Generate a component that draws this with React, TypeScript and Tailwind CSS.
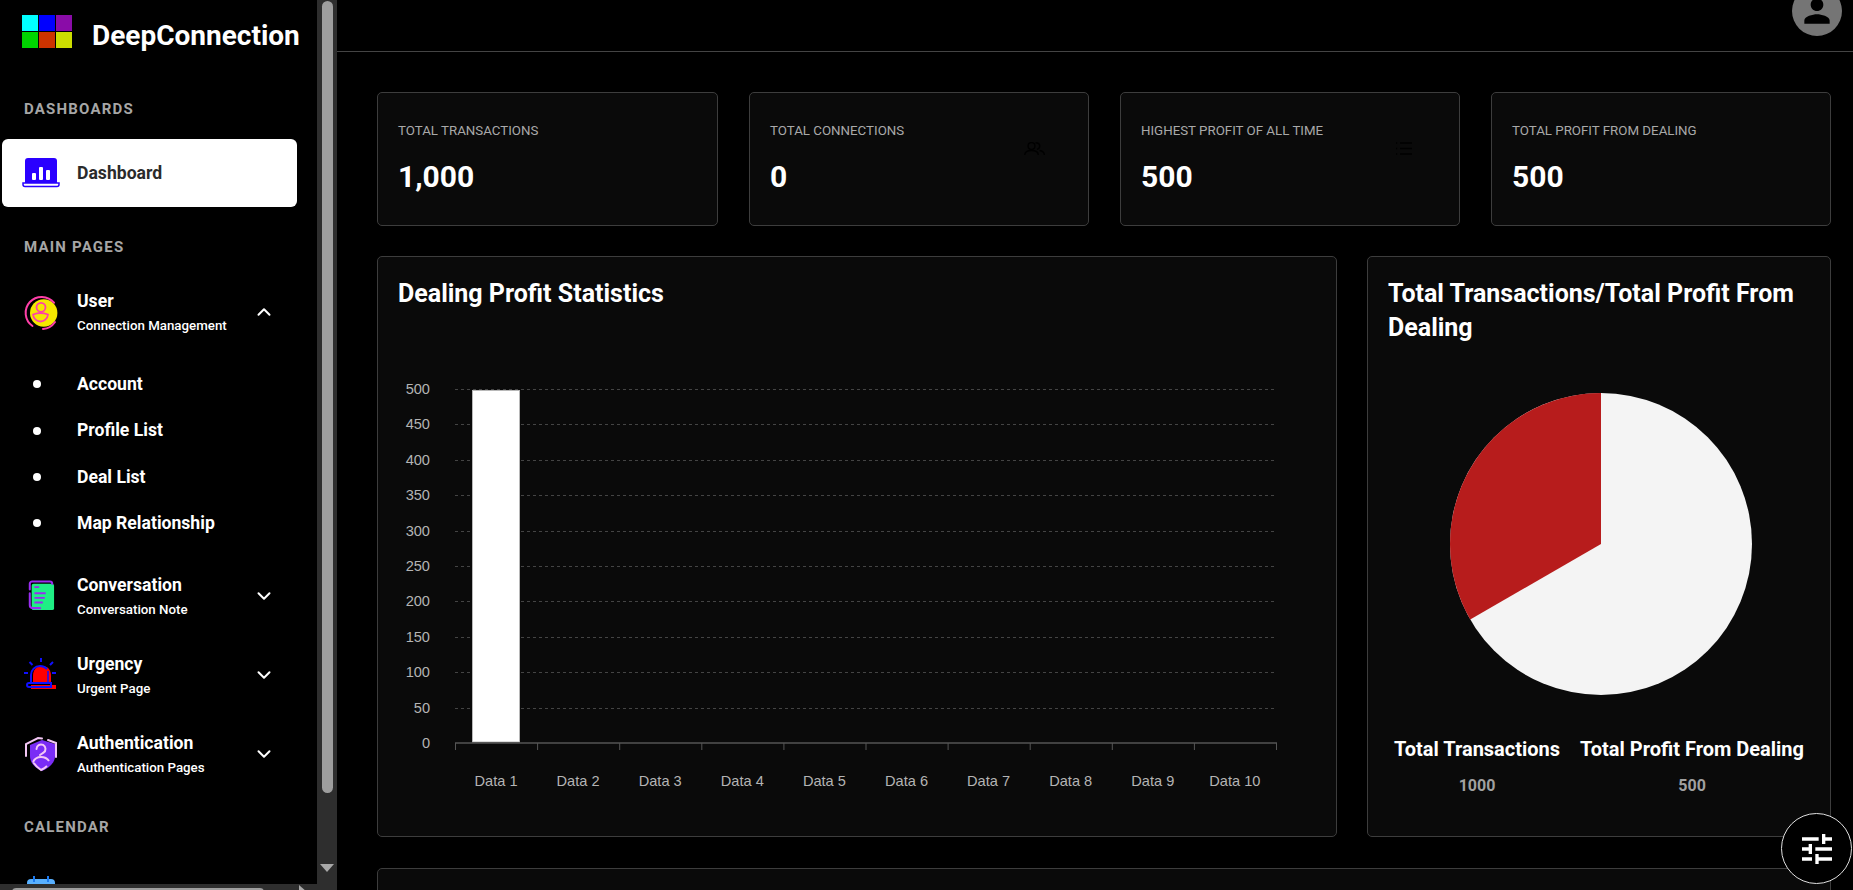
import { ChevronDown, ChevronUp } from "lucide-react";

function FaintUsers() {
	return (
		<svg width="21" height="13" viewBox="0 0 21 13" fill="none" stroke="currentColor" strokeWidth="1.4">
			<circle cx="7.5" cy="4" r="3.400" />
			<path d="M0.700 13c0-3 2.500-4.500 6.800-4.500s6.800 1.500 6.800 4.500" />
			<path d="M11.500 0.800c2.500 0 4.200 1.400 4.200 3.300 0 1.700-1 3-2.800 3.300" />
			<path d="M15.500 8.500c2.800 0.400 4.800 2 4.800 4.500" />
		</svg>
	);
}

function FaintList() {
	return (
		<svg width="21" height="13" viewBox="0 0 21 13" fill="none" stroke="currentColor" strokeWidth="1.4">
			<path d="M5 1h12M5 6.500h12M5 12h12" />
			<path d="M1 1h1.200M1 6.500h1.200M1 12h1.200" />
		</svg>
	);
}

const stats = [
	{ label: "Total Transactions", value: "1,000" },
	{ label: "Total Connections", value: "0", icon: <FaintUsers /> },
	{ label: "Highest Profit of all time", value: "500", icon: <FaintList /> },
	{ label: "Total Profit From Dealing", value: "500" },
];

const ticks = [500, 450, 400, 350, 300, 250, 200, 150, 100, 50, 0];
const bars = [1, 2, 3, 4, 5, 6, 7, 8, 9, 10];
const subItems = ["Account", "Profile List", "Deal List", "Map Relationship"];

function DashboardIcon() {
	return (
		<svg width="38" height="30" viewBox="0 0 38 30">
			<path d="M3 26V3a3 3 0 0 1 3-3h26a3 3 0 0 1 3 3v23z" fill="#2a00ff" />
			<rect x="10" y="15" width="4" height="7" rx="1" fill="#fff" />
			<rect x="17" y="9" width="4" height="13" rx="1" fill="#fff" />
			<rect x="24" y="12" width="4" height="10" rx="1" fill="#fff" />
			<path d="M1 25h36v1.500a2 2 0 0 1-2 2H3a2 2 0 0 1-2-2z" fill="#fff" stroke="#2a00ff" strokeWidth="1.500" />
		</svg>
	);
}

function UserIcon() {
	return (
		<svg width="40" height="40" viewBox="0 0 40 40" fill="none">
			<circle cx="22.700" cy="21" r="13.700" fill="#f5e800" />
			<path d="M33 10.700A16 16 0 1 0 11.500 34" stroke="#ff3fa8" strokeWidth="2" strokeLinecap="round" />
			<path d="M22 37A16 16 0 0 0 34 30" stroke="#ff3fa8" strokeWidth="2" strokeLinecap="round" />
			<circle cx="20" cy="15.300" r="4.500" stroke="#ff3fa8" strokeWidth="1.800" />
			<path d="M12 22.500c5-2 10-2 15 0-0.500 4.500-4 7-7.500 7s-7-2.500-7.500-7z" stroke="#ff3fa8" strokeWidth="1.800" />
		</svg>
	);
}

function ConversationIcon() {
	return (
		<svg width="28" height="34" viewBox="0 0 30 34" fill="none">
			<rect x="5" y="4" width="24" height="28" rx="2" fill="#1fef85" />
			<path d="M3 10V4a2.500 2.500 0 0 1 2.500-2.500h19A2.500 2.500 0 0 1 27 4" stroke="#9a2cf0" strokeWidth="2.200" strokeLinecap="round" />
			<path d="M3 14v13a3 3 0 0 0 3 3h8" stroke="#9a2cf0" strokeWidth="2.200" strokeLinecap="round" />
			<path d="M8 7.500h5M8 14h12M8 19h11M8 24h9" stroke="#9a2cf0" strokeWidth="2" />
		</svg>
	);
}

function UrgencyIcon() {
	return (
		<svg width="36" height="36" viewBox="0 0 36 36" fill="none">
			<path d="M10 27V19c0-6 3-10 9-10s9 4 9 10v8z" fill="#ff0000" />
			<path d="M8 28h25v4H8z" fill="#ff0000" />
			<path d="M8 25v-7c0-5 4-9 9-9 3 0 5 1 7 3" stroke="#1010ff" strokeWidth="2" />
			<path d="M6 26h22v4H6a2 2 0 0 1 0-4z" stroke="#1010ff" strokeWidth="2" />
			<path d="M25 14v12" stroke="#1010ff" strokeWidth="1.500" />
			<path d="M18 1v4M6.500 5l3 3M30 5l-3 3M1 16h4M29 16h4" stroke="#1010ff" strokeWidth="2" />
		</svg>
	);
}

function AuthIcon() {
	return (
		<svg width="34" height="38" viewBox="0 0 34 38" fill="none">
			<path d="M6 10l12-5 13 4v12c0 7-6 12-13 15-7-3-12-8-12-15z" fill="#7a2cf5" />
			<path d="M2 21V9l12-6 4 0.500" stroke="#f3c6f5" strokeWidth="2" strokeLinecap="round" />
			<path d="M24 5l8 3v14" stroke="#f3c6f5" strokeWidth="2" strokeLinecap="round" />
			<path d="M12.500 14a4.500 4.500 0 1 1 7 3.700L16 20" stroke="#f3c6f5" strokeWidth="2" strokeLinecap="round" />
			<path d="M9 27c2-4 5-5 8-5 3 0 6 1 8 4M9 27c2 3 5 6 8 8 2-1 4-2 6-4" stroke="#f3c6f5" strokeWidth="2" />
		</svg>
	);
}

function CalendarIcon() {
	return (
		<svg width="30" height="30" viewBox="0 0 30 30" fill="none">
			<rect x="1" y="3" width="28" height="26" rx="4" fill="#58b0ff" />
			<rect x="1" y="9" width="28" height="20" fill="#d8ecff" />
			<path d="M8 0v6M22 0v6" stroke="#1d7bf0" strokeWidth="2" />
		</svg>
	);
}

function NavRow({ icon, title, sub, open }: { icon: React.ReactNode; title: string; sub: string; open?: boolean }) {
	return (
		<div className="flex h-[68px] items-center">
			<div className="w-[77px] shrink-0 pl-[21px]">
				<div className="flex h-[40px] w-[40px] items-center justify-center">{icon}</div>
			</div>
			<div className="w-[173px] pt-[3px]">
				<div className="text-[17.6px] leading-[24px] font-bold text-white">{title}</div>
				<div className="mt-[1px] text-[13.3px] leading-[24px] font-medium text-white">{sub}</div>
			</div>
			<div className="flex w-[28px] justify-center text-white">
				{open ? <ChevronUp size={22} strokeWidth={2.2} /> : <ChevronDown size={22} strokeWidth={2.2} />}
			</div>
		</div>
	);
}

function SectionLabel({ text, className }: { text: string; className: string }) {
	return (
		<div className={`h-[24px] pl-[24px] text-[15px] leading-[26px] font-bold tracking-[1.2px] text-[#a6a6a6] uppercase ${className}`}>
			{text}
		</div>
	);
}

function Sidebar() {
	return (
		<aside className="relative h-screen w-[337px] shrink-0 overflow-hidden bg-black">
			<div className="w-[317px]">
				<div className="flex h-[96px] items-start pl-[22px]">
					<div className="mt-[15px] grid w-[50px] grid-cols-3 gap-[1px]">
						<div className="h-[16px] bg-[#00ffff]" />
						<div className="h-[16px] bg-[#0000ff]" />
						<div className="h-[16px] bg-[#8a0ca8]" />
						<div className="h-[16px] bg-[#00d400]" />
						<div className="h-[16px] bg-[#cc3300]" />
						<div className="h-[16px] bg-[#ccdd00]" />
					</div>
					<div className="mt-[16px] ml-[20px] text-[28px] leading-[40px] font-bold text-white">DeepConnection</div>
				</div>
				<SectionLabel text="Dashboards" className="" />
				<div className="mt-[19px] ml-[2px] flex h-[68px] w-[295px] items-center rounded-[6px] bg-white">
					<div className="ml-[20px]">
						<DashboardIcon />
					</div>
					<span className="ml-[17px] pt-[1px] text-[17.6px] font-bold text-[#2b2b2b]">Dashboard</span>
				</div>
				<SectionLabel text="Main Pages" className="mt-[27px]" />
				<div className="mt-[20px]">
					<NavRow icon={<UserIcon />} title="User" sub="Connection Management" open />
				</div>
				<div className="mt-[15px]">
					{subItems.map((item) => (
						<div key={item} className="flex h-[46.4px] items-center">
							<div className="ml-[33px] h-[8px] w-[8px] rounded-full bg-white" />
							<span className="ml-[36px] text-[17.6px] font-bold text-white">{item}</span>
						</div>
					))}
				</div>
				<div className="mt-[15.4px]">
					<NavRow icon={<ConversationIcon />} title="Conversation" sub="Conversation Note" />
				</div>
				<div className="mt-[11px]">
					<NavRow icon={<UrgencyIcon />} title="Urgency" sub="Urgent Page" />
				</div>
				<div className="mt-[11px]">
					<NavRow icon={<AuthIcon />} title="Authentication" sub="Authentication Pages" />
				</div>
				<SectionLabel text="Calendar" className="mt-[26px]" />
				<div className="mt-[38px] ml-[26px]">
					<CalendarIcon />
				</div>
			</div>

			{/* scrollbars */}
			<div className="absolute top-0 right-0 bottom-0 w-[20px] bg-[#2e2e2e]">
				<div className="mx-auto mt-[1px] h-[792px] w-[11px] rounded-full bg-[#9e9e9e]" />
				<div className="absolute top-[864px] left-[3px] h-0 w-0 border-x-[7px] border-t-[8px] border-x-transparent border-t-[#a8a8a8]" />
			</div>
			<div className="absolute right-[20px] bottom-0 left-0 h-[6px] bg-[#2e2e2e]">
				<div className="mt-[4px] ml-[12px] h-[8px] w-[252px] rounded-full bg-[#9e9e9e]" />
				<div className="absolute top-[1px] left-[299px] h-0 w-0 border-y-[7px] border-l-[8px] border-y-transparent border-l-[#a8a8a8]" />
			</div>
		</aside>
	);
}

function BarChart() {
	return (
		<svg className="mt-[20px] block" width="958" height="500" viewBox="378 330 958 500" fontFamily="'Liberation Sans', Arial, sans-serif" fontSize="14.6">
			{ticks.map((t, i) => {
				const y = Math.round(388 + i * 35.4) + 0.5;
				return (
					<g key={t}>
						{t !== 0 && <line x1="455" x2="1277" y1={y} y2={y} stroke="#444" strokeDasharray="3 3" />}
						<text x="430" y={y + 4} textAnchor="end" fill="#b4b4b4">
							{t}
						</text>
					</g>
				);
			})}
			<rect x="472.5" y="389.5" width="47" height="351.5" fill="#fff" stroke="#b8b8b8" />
			<line x1="455" x2="1277" y1="742" y2="742" stroke="#555" strokeWidth="1.500" />
			{bars.map((b, i) => (
				<g key={b}>
					<line x1={455.5 + i * 82.1} x2={455.5 + i * 82.1} y1="742" y2="749" stroke="#555" />
					<text x={496 + i * 82.1} y="785" textAnchor="middle" fill="#b4b4b4">
						Data {b}
					</text>
				</g>
			))}
			<line x1="1276.5" x2="1276.5" y1="742" y2="749" stroke="#555" />
		</svg>
	);
}

function PieChart() {
	return (
		<svg className="mt-[48px] ml-[82px] block" width="302" height="302" viewBox="-151 -151 302 302">
			<circle r="151" fill="#f4f4f4" />
			<path d="M0 0V-151A151 151 0 0 0 -130.770 75.500Z" fill="#b71c1c" />
		</svg>
	);
}

export default function App() {
	return (
		<div className="relative flex h-screen w-full overflow-hidden bg-black font-['Roboto',sans-serif]">
			<Sidebar />
			<main className="min-w-0 flex-1">
				<header className="flex h-[52px] justify-end border-b border-[#444] pr-[11px]">
					<div className="-mt-[14px] flex h-[50px] w-[50px] items-center justify-center rounded-full bg-[#757575]">
						<svg width="38" height="38" viewBox="0 0 24 24" fill="#000">
							<path d="M12 12c2.210 0 4-1.790 4-4s-1.790-4-4-4-4 1.790-4 4 1.790 4 4 4zm0 2c-2.670 0-8 1.340-8 4v2h16v-2c0-2.660-5.330-4-8-4z" />
						</svg>
					</div>
				</header>
				<div className="pt-[40px] pr-[22px] pl-[40px]">
					<div className="grid grid-cols-[341px_340px_340px_340px] gap-[31px]">
						{stats.map((s) => (
							<div key={s.label} className="relative h-[134px] rounded-[5px] border border-[#3d3d3d] bg-[#0a0a0a] pl-[20px]">
								<div className="mt-[26px] text-[13.3px] leading-[24px] text-[#a9a9a9] uppercase">{s.label}</div>
								<div className="mt-[14px] text-[30px] leading-[40px] font-bold text-white">{s.value}</div>
								{s.icon && <div className="absolute top-[49px] right-[43px] text-black">{s.icon}</div>}
							</div>
						))}
					</div>
					<div className="mt-[30px] flex gap-[30px]">
						<div className="h-[581px] w-[960px] rounded-[5px] border border-[#3d3d3d] bg-[#0a0a0a]">
							<h2 className="px-[20px] pt-[20px] text-[25px] leading-[34px] font-bold text-white">Dealing Profit Statistics</h2>
							<BarChart />
						</div>
						<div className="h-[581px] flex-1 rounded-[5px] border border-[#3d3d3d] bg-[#0a0a0a]">
							<h2 className="px-[20px] pt-[20px] text-[25px] leading-[34px] font-bold text-white">Total Transactions/Total Profit From Dealing</h2>
							<PieChart />
							<div className="mt-[40px] flex justify-center gap-[20px] text-center">
								<div>
									<div className="text-[20px] leading-[28px] font-bold text-white">Total Transactions</div>
									<div className="mt-[9px] text-[16px] leading-[28px] font-bold text-[#a0a0a0]">1000</div>
								</div>
								<div>
									<div className="text-[20px] leading-[28px] font-bold text-white">Total Profit From Dealing</div>
									<div className="mt-[9px] text-[16px] leading-[28px] font-bold text-[#a0a0a0]">500</div>
								</div>
							</div>
						</div>
					</div>
					<div className="mt-[31px] h-[300px] rounded-[5px] border border-[#3d3d3d] bg-[#0a0a0a]" />
				</div>
			</main>
			<button className="absolute top-[813px] left-[1781px] flex h-[71px] w-[71px] items-center justify-center rounded-full border border-[#e0e0e0] bg-black">
				<svg width="40" height="40" viewBox="0 0 24 24" fill="#fff">
					<path d="M3 17v2h6v-2H3zM3 5v2h10V5H3zm10 16v-2h8v-2h-8v-2h-2v6h2zM7 9v2H3v2h4v2h2V9H7zm14 4v-2H11v2h10zm-6-4h2V7h4V5h-4V3h-2v6z" />
				</svg>
			</button>
		</div>
	);
}
